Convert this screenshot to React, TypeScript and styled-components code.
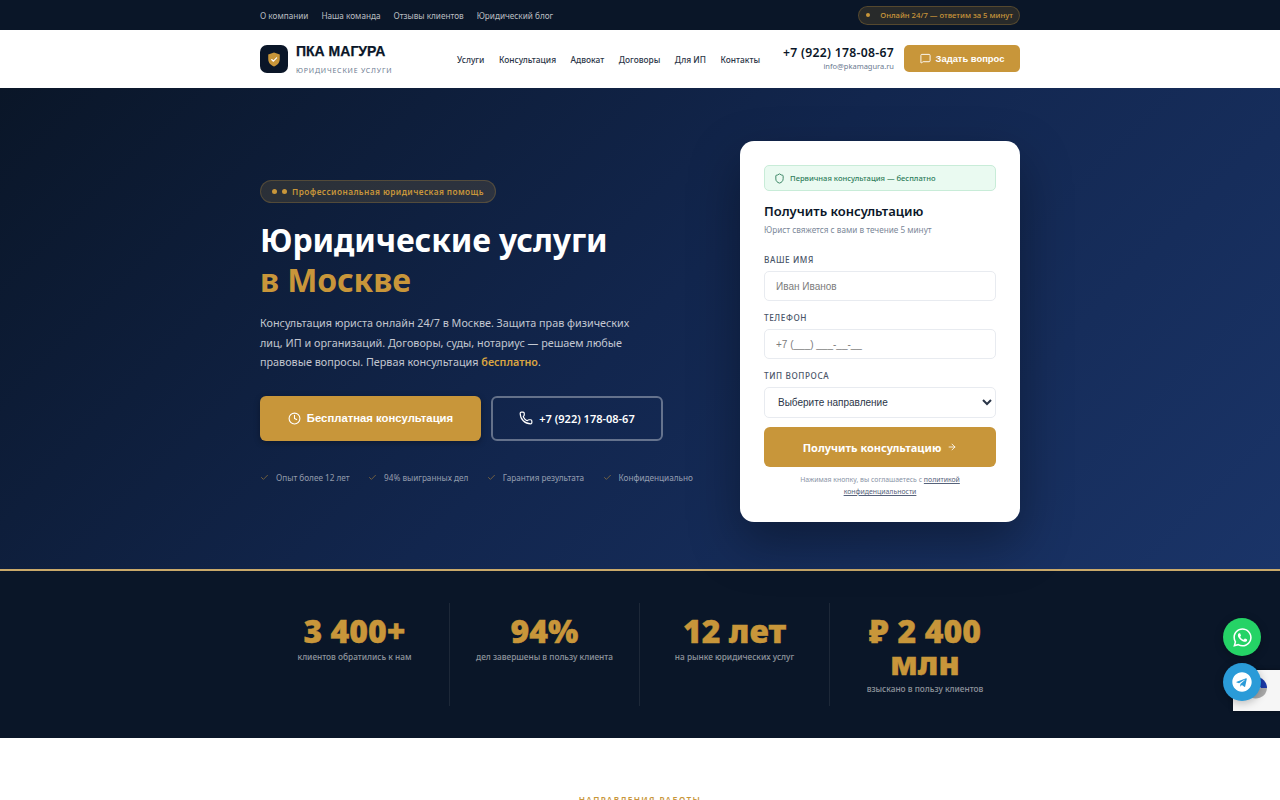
import React, { FC } from 'react';
import styled, { createGlobalStyle } from 'styled-components';
import { ArrowRight, Check, Clock, MessageSquare, Phone, Shield } from 'lucide-react';
import { FaTelegram, FaWhatsapp } from 'react-icons/fa';

const GOLD = '#c8963a';
const NAVY = '#0a1628';

const GlobalStyle = createGlobalStyle`
  * {
    box-sizing: border-box;
  }

  html,
  body {
    margin: 0;
    height: 800px;
    overflow: hidden;
    background: #fff;
    font-family: 'Noto Sans', 'Open Sans', sans-serif;
  }
`;

const Container = styled.div`
  width: 760px;
  margin: 0 auto;
`;

const TopBar = styled.div`
  height: 30px;
  background: ${NAVY};
`;

const TopBarInner = styled(Container)`
  height: 100%;
  display: flex;
  align-items: center;
  justify-content: space-between;
`;

const TopLinks = styled.nav`
  display: flex;
  gap: 13px;
`;

const TopLink = styled.a`
  font-size: 8.2px;
  white-space: nowrap;
  color: rgba(255, 255, 255, 0.72);
`;

const OnlinePill = styled.div`
  display: flex;
  align-items: center;
  gap: 10px;
  height: 19px;
  padding: 0 6px 0 7px;
  border-radius: 10px;
  border: 1px solid rgba(200, 150, 58, 0.28);
  background: rgba(200, 150, 58, 0.16);
  font-size: 7.7px;
  font-weight: 500;
  white-space: nowrap;
  color: ${GOLD};
`;

const Dot = styled.span<{ size?: number }>`
  flex: none;
  width: ${({ size }) => size ?? 4}px;
  height: ${({ size }) => size ?? 4}px;
  border-radius: 50%;
  background: ${GOLD};
`;

const Header = styled.header`
  height: 58px;
  background: #fff;
`;

const HeaderInner = styled(Container)`
  height: 100%;
  display: flex;
  align-items: center;
`;

const LogoBox = styled.div`
  width: 28px;
  height: 28px;
  margin-right: 8px;
  border-radius: 7px;
  background: ${NAVY};
  display: flex;
  align-items: center;
  justify-content: center;
`;

const BrandText = styled.div`
  width: 161px;
`;

const BrandName = styled.div`
  font-family: 'Liberation Sans', Arial, sans-serif;
  font-size: 14px;
  line-height: 16px;
  font-weight: 700;
  -webkit-text-stroke: 0.25px ${NAVY};
  color: ${NAVY};
`;

const BrandSub = styled.div`
  margin-top: 7px;
  font-size: 7px;
  line-height: 10px;
  letter-spacing: 0.8px;
  white-space: nowrap;
  color: #6b7a90;
`;

const MainNav = styled.nav`
  display: flex;
  gap: 14.5px;
`;

const MainLink = styled.a`
  font-size: 8.4px;
  font-weight: 500;
  white-space: nowrap;
  color: #2a3547;
`;

const HeaderRight = styled.div`
  margin-left: auto;
  padding-bottom: 2px;
  display: flex;
  align-items: center;
  gap: 10px;
`;

const ContactBlock = styled.div`
  text-align: right;
`;

const PhoneNumber = styled.div`
  font-size: 12.2px;
  line-height: 16px;
  font-weight: 600;
  letter-spacing: 0.3px;
  white-space: nowrap;
  color: ${NAVY};
`;

const Email = styled.div`
  font-size: 7.5px;
  line-height: 10px;
  color: #6b7a90;
`;

const AskButton = styled.button`
  width: 116px;
  height: 27px;
  border: none;
  border-radius: 5px;
  background: ${GOLD};
  color: #fff;
  display: flex;
  align-items: center;
  justify-content: center;
  gap: 5px;
  font-family: 'Liberation Sans', Arial, sans-serif;
  font-size: 9.4px;
  font-weight: 700;
`;

const Hero = styled.section`
  height: 481px;
  background: linear-gradient(135deg, #0a1628 0%, #12264e 50%, #1a3468 100%);
`;

const HeroInner = styled(Container)`
  height: 100%;
  padding-top: 53px;
  display: grid;
  grid-template-columns: 1fr 280px;
  align-items: start;
`;

const HeroLeft = styled.div`
  padding-top: 36px;
`;

const Eyebrow = styled.div`
  display: inline-flex;
  align-items: center;
  gap: 5px;
  height: 23px;
  padding: 0 11px;
  border-radius: 12px;
  border: 1px solid rgba(200, 150, 58, 0.25);
  background: rgba(200, 150, 58, 0.16);
  font-size: 8.3px;
  font-weight: 600;
  letter-spacing: 0.42px;
  white-space: nowrap;
  color: ${GOLD};
`;

const Title = styled.h1`
  margin: 17px 0 0;
  font-family: 'Noto Sans', sans-serif;
  font-size: 32px;
  line-height: 40px;
  font-weight: 700;
  letter-spacing: -0.12px;
  color: #fff;
`;

const TitleAccent = styled.span`
  display: block;
  color: ${GOLD};
`;

const Lead = styled.p`
  margin: 13px 0 0;
  width: 375px;
  font-size: 10.8px;
  line-height: 19.5px;
  color: rgba(255, 255, 255, 0.75);

  strong {
    font-weight: 600;
    color: #d9a441;
  }
`;

const HeroButtons = styled.div`
  margin-top: 24px;
  display: flex;
  gap: 10px;
`;

const PrimaryButton = styled.button`
  width: 221px;
  height: 45px;
  border: none;
  border-radius: 6px;
  background: ${GOLD};
  box-shadow: 0 2px 6px rgba(0, 0, 0, 0.3);
  color: #fff;
  display: flex;
  align-items: center;
  justify-content: center;
  gap: 6px;
  font-family: 'Liberation Sans', Arial, sans-serif;
  font-size: 11.3px;
  font-weight: 700;
`;

const OutlineButton = styled.button`
  width: 172px;
  height: 45px;
  border: 2px solid rgba(255, 255, 255, 0.35);
  border-radius: 6px;
  background: transparent;
  color: #fff;
  display: flex;
  align-items: center;
  justify-content: center;
  gap: 6px;
  font-family: 'Noto Sans', sans-serif;
  font-size: 11px;
  font-weight: 600;
  white-space: nowrap;
`;

const Perks = styled.ul`
  list-style: none;
  margin: 31px 0 0;
  padding: 0;
  display: flex;
  gap: 18.5px;
`;

const Perk = styled.li`
  display: flex;
  align-items: center;
  gap: 7px;
  font-size: 8.2px;
  white-space: nowrap;
  color: rgba(255, 255, 255, 0.55);

  svg {
    color: ${GOLD};
    opacity: 0.7;
  }
`;

const FormCard = styled.form`
  height: 381px;
  padding: 24px;
  border-radius: 14px;
  background: #fff;
  box-shadow: 0 20px 50px rgba(0, 0, 0, 0.35);
`;

const FreeBadge = styled.div`
  height: 26px;
  padding: 0 9px;
  display: flex;
  align-items: center;
  gap: 5px;
  border-radius: 5px;
  border: 1px solid #c8ecd8;
  background: #eafaf1;
  font-size: 7.6px;
  font-weight: 500;
  color: #2f7d5b;
`;

const FormTitle = styled.h2`
  margin: 11px 0 0;
  font-size: 13px;
  line-height: 18px;
  font-weight: 600;
  color: ${NAVY};
`;

const FormSub = styled.p`
  margin: 4px 0 18px;
  font-size: 8.2px;
  line-height: 12px;
  color: #7b8798;
`;

const Label = styled.label`
  display: block;
  margin: 11px 0 5px;
  font-size: 8.2px;
  line-height: 12px;
  font-weight: 500;
  letter-spacing: 0.6px;
  color: #4a5568;
`;

const TextInput = styled.input`
  display: block;
  width: 100%;
  height: 30px;
  padding: 0 11px;
  border: 1px solid #e8ebf0;
  border-radius: 5px;
  background: #fff;
  font-family: 'Liberation Sans', Arial, sans-serif;
  font-size: 10px;
  color: #333;

  &::placeholder {
    color: #7c7c7c;
    opacity: 1;
  }
`;

const SelectInput = styled.select`
  display: block;
  width: 100%;
  height: 31px;
  padding: 0 9px;
  border: 1px solid #e8ebf0;
  border-radius: 5px;
  background: #fff;
  font-family: 'Liberation Sans', Arial, sans-serif;
  font-size: 10px;
  color: #2a3547;
`;

const SubmitButton = styled.button`
  width: 100%;
  height: 40px;
  margin-top: 9px;
  border: none;
  border-radius: 6px;
  background: ${GOLD};
  color: #fff;
  display: flex;
  align-items: center;
  justify-content: center;
  gap: 6px;
  font-family: 'Noto Sans', sans-serif;
  font-size: 11px;
  font-weight: 700;
`;

const Disclaimer = styled.p`
  margin: 7px 0 0;
  padding: 0 20px;
  text-align: center;
  font-size: 6.9px;
  line-height: 12px;
  color: #8a94a6;

  a {
    color: #56627a;
    text-decoration: underline;
  }
`;

const Stats = styled.section`
  height: 169px;
  border-top: 2px solid #c9a96a;
  background: ${NAVY};
`;

const StatsGrid = styled(Container)`
  padding-top: 32px;
  display: grid;
  grid-template-columns: repeat(4, 1fr);
`;

const StatItem = styled.div<{ last?: boolean }>`
  height: 103px;
  padding: 12px 20px 0;
  text-align: center;
  border-right: ${({ last }) => (last ? 'none' : '1px solid rgba(255, 255, 255, 0.08)')};
`;

const StatValue = styled.div`
  font-size: 32px;
  line-height: 32px;
  font-weight: 900;
  -webkit-text-stroke: 0.4px ${GOLD};
  color: ${GOLD};
`;

const StatLabel = styled.div`
  margin-top: 4px;
  font-size: 8.3px;
  line-height: 12px;
  font-weight: 500;
  color: rgba(255, 255, 255, 0.55);
`;

const Directions = styled.section`
  height: 62px;
  padding-top: 56px;
  text-align: center;
  background: #fff;
`;

const DirectionsTag = styled.div`
  font-size: 8.2px;
  line-height: 12px;
  font-weight: 600;
  letter-spacing: 1.4px;
  color: ${GOLD};
`;

const FloatButton = styled.a<{ bg: string; bottom: number }>`
  position: fixed;
  right: 19px;
  bottom: ${({ bottom }) => bottom}px;
  width: 38px;
  height: 38px;
  border-radius: 50%;
  background: ${({ bg }) => bg};
  display: flex;
  align-items: center;
  justify-content: center;
  color: #fff;
  box-shadow: 0 2px 8px rgba(0, 0, 0, 0.25);
  z-index: 10;
`;

const Recaptcha = styled.div`
  position: fixed;
  left: 1233px;
  top: 670px;
  width: 47px;
  height: 41px;
  padding: 5px 0 0 10px;
  background: #f6f6f6;
  box-shadow: 0 0 4px rgba(0, 0, 0, 0.4);
`;

const topLinks = ['О компании', 'Наша команда', 'Отзывы клиентов', 'Юридический блог'];
const mainLinks = ['Услуги', 'Консультация', 'Адвокат', 'Договоры', 'Для ИП', 'Контакты'];
const perks = ['Опыт более 12 лет', '94% выигранных дел', 'Гарантия результата', 'Конфиденциально'];
const stats = [
  { value: '3 400+', label: 'клиентов обратились к нам' },
  { value: '94%', label: 'дел завершены в пользу клиента' },
  { value: '12 лет', label: 'на рынке юридических услуг' },
  { value: '₽ 2 400 млн', label: 'взыскано в пользу клиентов' },
];

const LogoShield: FC = () => (
  <svg width='14' height='15' viewBox='0 0 24 26' aria-hidden='true'>
    <path d='M12 1 22 4.5V12c0 6.5-4.2 10.8-10 13C6.200 22.800 2 18.500 2 12V4.500Z' fill={GOLD} />
    <path d='m8 13 3 3 5.500-6' fill='none' stroke='#fff' strokeWidth='2' strokeLinecap='round' strokeLinejoin='round' />
  </svg>
);

const App: FC = () => {
  return (
    <>
      <GlobalStyle />
      <TopBar>
        <TopBarInner>
          <TopLinks>
            {topLinks.map((link) => (
              <TopLink key={link}>{link}</TopLink>
            ))}
          </TopLinks>
          <OnlinePill>
            <Dot />
            Онлайн 24/7 — ответим за 5 минут
          </OnlinePill>
        </TopBarInner>
      </TopBar>

      <Header>
        <HeaderInner>
          <LogoBox>
            <LogoShield />
          </LogoBox>
          <BrandText>
            <BrandName>ПКА МАГУРА</BrandName>
            <BrandSub>ЮРИДИЧЕСКИЕ УСЛУГИ</BrandSub>
          </BrandText>
          <MainNav>
            {mainLinks.map((link) => (
              <MainLink key={link}>{link}</MainLink>
            ))}
          </MainNav>
          <HeaderRight>
            <ContactBlock>
              <PhoneNumber>+7 (922) 178-08-67</PhoneNumber>
              <Email>info@pkamagura.ru</Email>
            </ContactBlock>
            <AskButton type='button'>
              <MessageSquare size={11} />
              Задать вопрос
            </AskButton>
          </HeaderRight>
        </HeaderInner>
      </Header>

      <Hero>
        <HeroInner>
          <HeroLeft>
            <Eyebrow>
              <Dot size={5} />
              <Dot size={5} />
              Профессиональная юридическая помощь
            </Eyebrow>
            <Title>
              Юридические услуги
              <TitleAccent>в Москве</TitleAccent>
            </Title>
            <Lead>
              Консультация юриста онлайн 24/7 в Москве. Защита прав физических лиц, ИП и организаций. Договоры, суды,
              нотариус — решаем любые правовые вопросы. Первая консультация <strong>бесплатно</strong>.
            </Lead>
            <HeroButtons>
              <PrimaryButton type='button'>
                <Clock size={13} />
                Бесплатная консультация
              </PrimaryButton>
              <OutlineButton type='button'>
                <Phone size={14} />
                +7 (922) 178-08-67
              </OutlineButton>
            </HeroButtons>
            <Perks>
              {perks.map((perk) => (
                <Perk key={perk}>
                  <Check size={9} />
                  {perk}
                </Perk>
              ))}
            </Perks>
          </HeroLeft>

          <FormCard>
            <FreeBadge>
              <Shield size={11} />
              Первичная консультация — бесплатно
            </FreeBadge>
            <FormTitle>Получить консультацию</FormTitle>
            <FormSub>Юрист свяжется с вами в течение 5 минут</FormSub>
            <Label>ВАШЕ ИМЯ</Label>
            <TextInput placeholder='Иван Иванов' />
            <Label>ТЕЛЕФОН</Label>
            <TextInput placeholder='+7 (___) ___-__-__' />
            <Label>ТИП ВОПРОСА</Label>
            <SelectInput defaultValue='none'>
              <option value='none'>Выберите направление</option>
            </SelectInput>
            <SubmitButton type='button'>
              Получить консультацию
              <ArrowRight size={10} />
            </SubmitButton>
            <Disclaimer>
              Нажимая кнопку, вы соглашаетесь с <a>политикой конфиденциальности</a>
            </Disclaimer>
          </FormCard>
        </HeroInner>
      </Hero>

      <Stats>
        <StatsGrid>
          {stats.map((stat, index) => (
            <StatItem key={stat.label} last={index === stats.length - 1}>
              <StatValue>{stat.value}</StatValue>
              <StatLabel>{stat.label}</StatLabel>
            </StatItem>
          ))}
        </StatsGrid>
      </Stats>

      <Directions>
        <DirectionsTag>НАПРАВЛЕНИЯ РАБОТЫ</DirectionsTag>
      </Directions>

      <Recaptcha>
        <svg width='26' height='26' viewBox='0 0 26 26' aria-hidden='true'>
          <path d='M13 2a11 11 0 0 1 11 11h-6l-5-5Z' fill='#1c3aa9' />
          <path d='M24 13a11 11 0 0 1-19 7l5-5 8-2Z' fill='#aaa' />
        </svg>
      </Recaptcha>
      <FloatButton bg='#25d366' bottom={144}>
        <FaWhatsapp size={21} />
      </FloatButton>
      <FloatButton bg='#2a9bd8' bottom={99}>
        <FaTelegram size={20} />
      </FloatButton>
    </>
  );
};

export default App;
